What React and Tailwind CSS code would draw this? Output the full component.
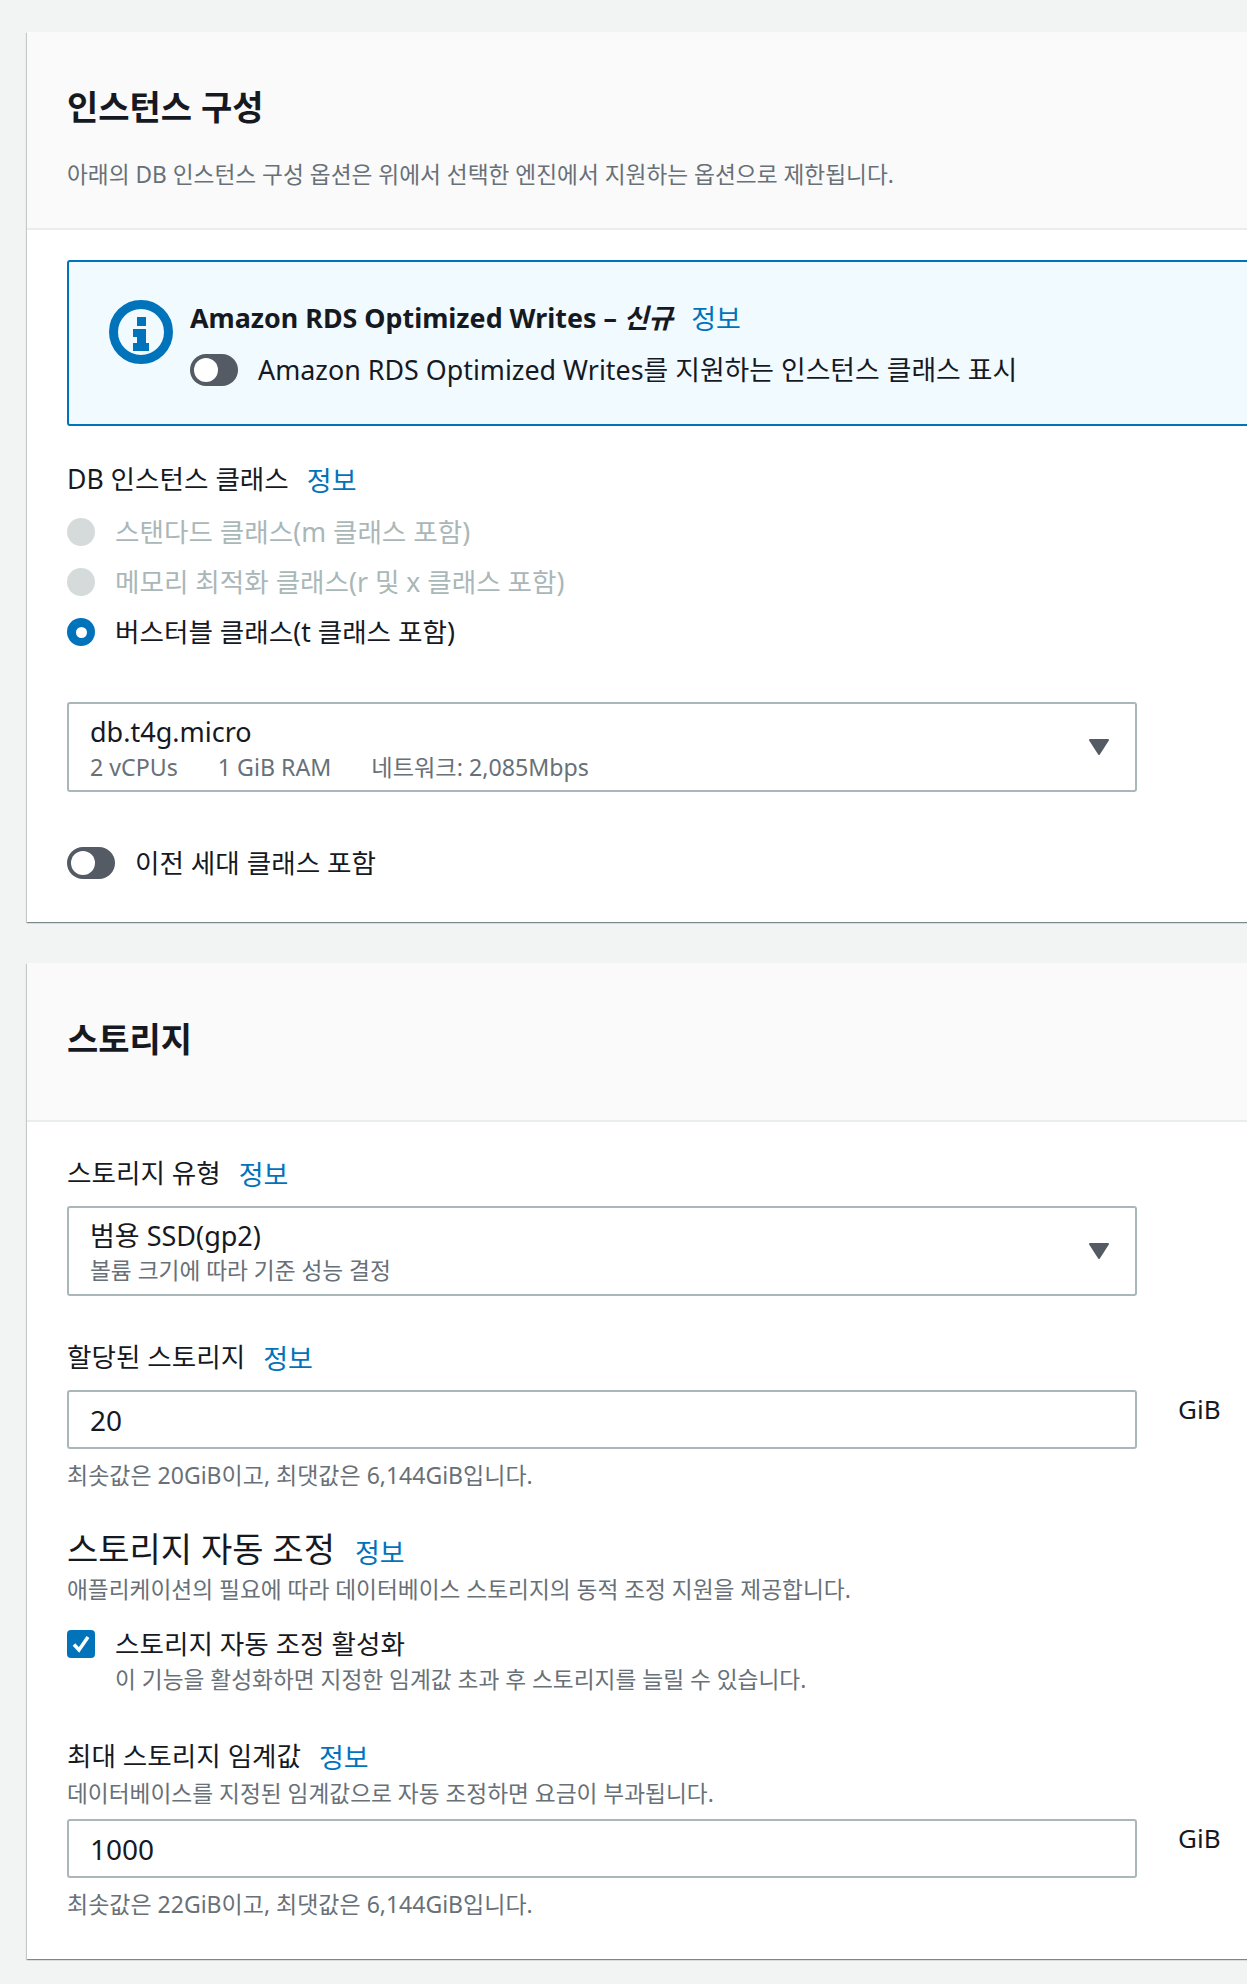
import React from 'react';

const Info = ({ className = '' }) => (
  <span className={`text-[#0073bb] text-[27px] leading-none ${className}`}>정보</span>
);

const Toggle = () => (
  <span className="flex items-center w-[48px] h-[32px] rounded-full bg-[#545b64] pl-[4px] shrink-0">
    <span className="block w-[24px] h-[24px] rounded-full bg-white" />
  </span>
);

const Radio = ({ state, label }) => (
  <div className="flex items-center h-[50px]">
    {state === 'checked' ? (
      <span className="flex items-center justify-center w-[28px] h-[28px] rounded-full bg-[#0073bb] shrink-0">
        <span className="block w-[11px] h-[11px] rounded-full bg-white" />
      </span>
    ) : (
      <span className="block w-[28px] h-[28px] rounded-full bg-[#d5dbdb] shrink-0" />
    )}
    <span className={`ml-[20px] pt-[2px] text-[26.6px] ${state === 'checked' ? 'text-[#16191f]' : 'text-[#aab7b8]'}`}>{label}</span>
  </div>
);

const Caret = () => (
  <svg width="22" height="18" viewBox="0 0 22 18" className="shrink-0 self-center mt-[-11px]">
    <path d="M2 2 L20 2 L11 16 Z" fill="#545b64" stroke="#545b64" strokeWidth="2" strokeLinejoin="round" />
  </svg>
);

const SelectBox = ({ title, children }) => (
  <div className="flex items-start justify-between w-[1070px] h-[90px] border-2 border-[#aab7b8] rounded-[3px] pl-[21px] pr-[25px] pt-[11px]">
    <div>
      <div className="text-[27px] leading-[34px] text-[#16191f]">{title}</div>
      <div className="mt-[3px] text-[23.2px] leading-[30px] text-[#687078] flex gap-[40px]">{children}</div>
    </div>
    <Caret />
  </div>
);

const NumberInput = ({ value }) => (
  <div className="flex items-start">
    <div className="flex items-center w-[1070px] h-[59px] border-2 border-[#aab7b8] rounded-[3px] pl-[21px] text-[28px] text-[#16191f]">
      {value}
    </div>
    <span className="ml-[41px] text-[26px] leading-[38px] text-[#16191f]">GiB</span>
  </div>
);

const Hint = ({ children, className = '' }) => (
  <div className={`text-[22.7px] leading-[30px] text-[#687078] ${className}`}>{children}</div>
);

const Card = ({ className = '', children }) => (
  <section className={`w-[1240px] bg-white shadow-[0_1px_1px_0_rgba(0,28,36,0.3),1px_1px_1px_0_rgba(0,28,36,0.15),-1px_1px_1px_0_rgba(0,28,36,0.15)] ${className}`}>
    {children}
  </section>
);

const Label = ({ children }) => (
  <div className="flex items-center h-[40px]">
    <span className="pt-[2px] text-[26.6px]">{children}</span>
    <Info className="ml-[18px] pt-[2px]" />
  </div>
);

export default function App() {
  return (
    <div
      className="w-[1247px] h-[1984px] overflow-hidden bg-[#f2f3f3] pl-[27px] pt-[32px] text-[#16191f]"
      style={{ fontFamily: '"Noto Sans", "Noto Sans CJK KR", sans-serif' }}
    >
      <Card className="h-[890px]">
        <div className="h-[198px] bg-[#fafafa] border-b-2 border-[#eaeded] pl-[40px] pt-[50px]">
          <h2 className="text-[34px] leading-[50px] font-bold">인스턴스 구성</h2>
          <p className="mt-[28px] text-[22.7px] leading-[30px] text-[#687078]">
            아래의 DB 인스턴스 구성 옵션은 위에서 선택한 엔진에서 지원하는 옵션으로 제한됩니다.
          </p>
        </div>
        <div className="pl-[40px] pt-[30px]">
          <div className="flex w-[1240px] h-[166px] bg-[#f1faff] border-2 border-[#0073bb] rounded-[3px] pl-[40px] pt-[39px]">
            <svg width="64" height="64" viewBox="0 0 64 64" className="shrink-0 mt-[-1px]">
              <circle cx="32" cy="32" r="27.5" fill="none" stroke="#0073bb" strokeWidth="9" />
              <path d="M28 17h9v9h-9z M24 29h13v14h3v8H24v-8h4v-6h-4z" fill="#0073bb" />
            </svg>
            <div className="ml-[17px]">
              <div className="flex items-center h-[40px] mt-[-3px]">
                <span className="text-[26.85px] font-bold">Amazon RDS Optimized Writes – <em>신규</em></span>
                <Info className="ml-[18px]" />
              </div>
              <div className="flex items-center mt-[12px]">
                <Toggle />
                <span className="ml-[20px] text-[26.85px]">Amazon RDS Optimized Writes를 지원하는 인스턴스 클래스 표시</span>
              </div>
            </div>
          </div>

          <div className="mt-[33px]">
            <Label>DB 인스턴스 클래스</Label>
          </div>
          <div className="mt-[8px]">
            <Radio state="disabled" label="스탠다드 클래스(m 클래스 포함)" />
            <Radio state="disabled" label="메모리 최적화 클래스(r 및 x 클래스 포함)" />
            <Radio state="checked" label="버스터블 클래스(t 클래스 포함)" />
          </div>
          <div className="mt-[45px]">
            <SelectBox title="db.t4g.micro">
              <span>2 vCPUs</span>
              <span>1 GiB RAM</span>
              <span>네트워크: 2,085Mbps</span>
            </SelectBox>
          </div>
          <div className="flex items-center mt-[50px]">
            <Toggle />
            <span className="ml-[20px] pt-[2px] text-[26.6px]">이전 세대 클래스 포함</span>
          </div>
        </div>
      </Card>

      <Card className="h-[996px] mt-[41px]">
        <div className="h-[159px] bg-[#fafafa] border-b-2 border-[#eaeded] pl-[40px] pt-[51px]">
          <h2 className="text-[34px] leading-[50px] font-bold">스토리지</h2>
        </div>
        <div className="pl-[40px]">
          <div className="mt-[31px]">
            <Label>스토리지 유형</Label>
          </div>
          <div className="mt-[13px]">
            <SelectBox title="범용 SSD(gp2)">
              <span className="text-[22.7px]">볼륨 크기에 따라 기준 성능 결정</span>
            </SelectBox>
          </div>
          <div className="mt-[41px]">
            <Label>할당된 스토리지</Label>
          </div>
          <div className="mt-[13px]">
            <NumberInput value="20" />
          </div>
          <Hint className="mt-[11px] text-[23px]">최솟값은 20GiB이고, 최댓값은 6,144GiB입니다.</Hint>

          <div className="flex items-center h-[44px] mt-[37px]">
            <span className="text-[34px]">스토리지 자동 조정</span>
            <Info className="ml-[20px] mt-[6px]" />
          </div>
          <Hint className="mt-[4px]">애플리케이션의 필요에 따라 데이터베이스 스토리지의 동적 조정 지원을 제공합니다.</Hint>
          <div className="flex items-center h-[40px] mt-[19px]">
            <span className="flex items-center justify-center w-[28px] h-[28px] rounded-[4px] bg-[#0073bb] shrink-0">
              <svg width="20" height="20" viewBox="0 0 20 20">
                <path d="M3 10.5 L8 16 L17 3" fill="none" stroke="white" strokeWidth="3.5" />
              </svg>
            </span>
            <span className="ml-[20px] pt-[2px] text-[26.6px]">스토리지 자동 조정 활성화</span>
          </div>
          <Hint className="ml-[48px] mt-[1px]">이 기능을 활성화하면 지정한 임계값 초과 후 스토리지를 늘릴 수 있습니다.</Hint>

          <div className="mt-[41px]">
            <Label>최대 스토리지 임계값</Label>
          </div>
          <Hint className="mt-[3px]">데이터베이스를 지정된 임계값으로 자동 조정하면 요금이 부과됩니다.</Hint>
          <div className="mt-[10px]">
            <NumberInput value="1000" />
          </div>
          <Hint className="mt-[11px] text-[23px]">최솟값은 22GiB이고, 최댓값은 6,144GiB입니다.</Hint>
        </div>
      </Card>
    </div>
  );
}
